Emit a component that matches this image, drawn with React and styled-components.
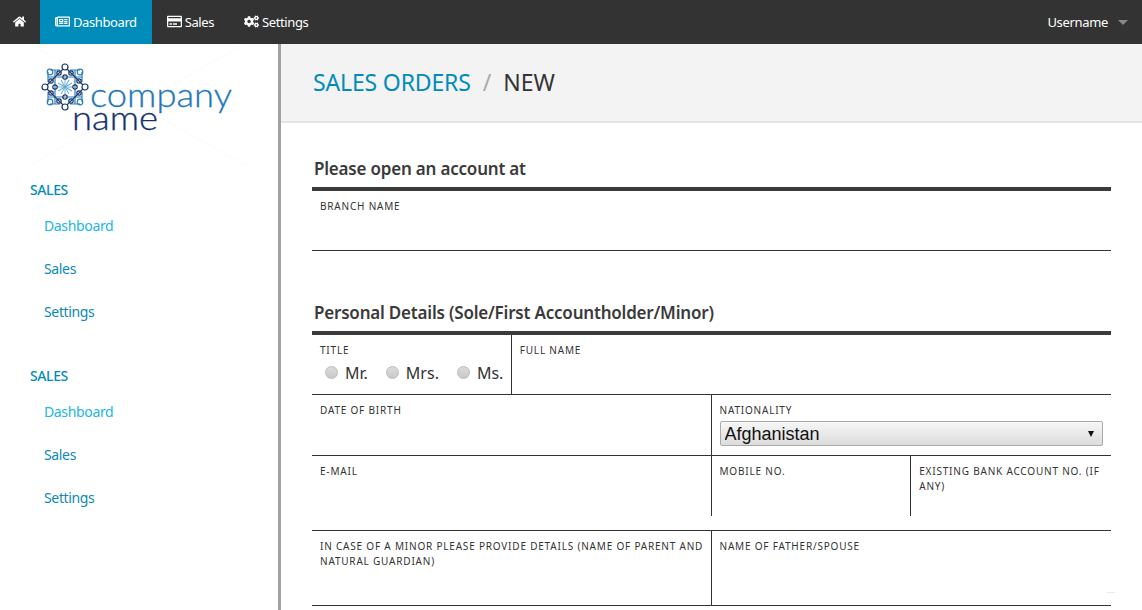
import React from 'react'
import styled, { createGlobalStyle } from 'styled-components'
import { FaHome, FaRegNewspaper, FaRegCreditCard, FaCogs } from 'react-icons/fa'

const GlobalStyle = createGlobalStyle`
  html, body {
    margin: 0;
    height: 100%;
    overflow: hidden;
    background: #fff;
    font-family: "Noto Sans", "Open Sans", sans-serif;
  }
  * { box-sizing: border-box; }
`

const tips = [[0, -20], [20, 0], [0, 20], [-20, 0]]
const links = [[-6, -14], [6, -14], [-14, -6], [14, -6], [-14, 6], [14, 6], [-6, 14], [6, 14], [0, -10], [10, 0], [0, 10], [-10, 0]]
const corners = [[-15, -15], [15, -15], [-15, 15], [15, 15]]
const rays = [0, 30, 60, 90, 120, 150]

function Logo() {
  return (
    <LogoSvg viewBox="30 44 215 121" width="215" height="121">
      <g stroke="#f9fafb" strokeWidth="1">
        <line x1="30" y1="44" x2="245" y2="165" />
        <line x1="245" y1="44" x2="30" y2="165" />
      </g>
      <g transform="translate(65 87)" fill="none">
        <g stroke="#2f7fb8" strokeWidth="1.2">
          {corners.map(([x, y]) => (
            <circle key={`c${x}${y}`} cx={x} cy={y} r="2.8" />
          ))}
          <path d="M-17 -10H17M-17 10H17M-10 -17V17M10 -17V17M-17 -15V-5M17 -15V-5M-17 15V5M17 15V5M-15 -17H-5M15 -17H5M-15 17H-5M15 17H5" />
        </g>
        <g stroke="#62a8d8" strokeWidth="0.9">
          {rays.map(a => (
            <line key={a} x1="-8" y1="0" x2="8" y2="0" transform={`rotate(${a})`} />
          ))}
        </g>
        <g stroke="#15356f" strokeWidth="1.2">
          <path d="M0 -20L20 0L0 20L-20 0Z" />
          {tips.map(([x, y]) => (
            <circle key={`t${x}${y}`} cx={x} cy={y} r="3" fill="#fff" />
          ))}
          {links.map(([x, y]) => (
            <circle key={`l${x}${y}`} cx={x} cy={y} r="2.2" />
          ))}
        </g>
      </g>
      <LogoText x="90" y="107" fontSize="33" fill="#1f78ba" stroke="#1f78ba" textLength="142" lengthAdjust="spacingAndGlyphs">company</LogoText>
      <LogoText x="72" y="130" fontSize="33" fill="#14306e" stroke="#14306e" textLength="86" lengthAdjust="spacingAndGlyphs">name</LogoText>
    </LogoSvg>
  )
}

function SideGroup() {
  return (
    <Group>
      <GroupTitle>SALES</GroupTitle>
      <SideLink $active>Dashboard</SideLink>
      <SideLink>Sales</SideLink>
      <SideLink>Settings</SideLink>
    </Group>
  )
}

export default function App() {
  return (
    <>
      <GlobalStyle />
      <TopBar>
        <NavItem aria-label="Home"><FaHome size={13} /></NavItem>
        <NavItem $active><FaRegNewspaper size={15} />Dashboard</NavItem>
        <NavItem><FaRegCreditCard size={15} />Sales</NavItem>
        <NavItem><FaCogs size={15} />Settings</NavItem>
        <UserMenu>Username<Caret /></UserMenu>
      </TopBar>
      <Page>
        <Sidebar>
          <Logo />
          <SideGroup />
          <SideGroup />
        </Sidebar>
        <Main>
          <PageHeader>
            <Crumb>SALES ORDERS</Crumb>
            <Slash>/</Slash>
            <Current>NEW</Current>
          </PageHeader>
          <Content>
            <Section>
              <SectionTitle>Please open an account at</SectionTitle>
              <Row $h={60}>
                <Cell $w={100}><Label>Branch Name</Label></Cell>
              </Row>
            </Section>
            <Section $top={47}>
              <SectionTitle>Personal Details (Sole/First Accountholder/Minor)</SectionTitle>
              <Row $h={60}>
                <Cell $w={25}>
                  <Label>Title</Label>
                  <Radios>
                    <RadioLabel><Radio type="radio" name="title" />Mr.</RadioLabel>
                    <RadioLabel><Radio type="radio" name="title" />Mrs.</RadioLabel>
                    <RadioLabel><Radio type="radio" name="title" />Ms.</RadioLabel>
                  </Radios>
                </Cell>
                <Cell $w={75}><Label>Full Name</Label></Cell>
              </Row>
              <Row $h={61}>
                <Cell $w={50}><Label>Date of Birth</Label></Cell>
                <Cell $w={50}>
                  <Label>Nationality</Label>
                  <SelectWrap>
                    <Select defaultValue="Afghanistan">
                      <option>Afghanistan</option>
                    </Select>
                  </SelectWrap>
                </Cell>
              </Row>
              <Row $h={60} $open>
                <Cell $w={50}><Label>E-mail</Label></Cell>
                <Cell $w={25}><Label>Mobile No.</Label></Cell>
                <Cell $w={25}><Label>Existing Bank Account No. (If Any)</Label></Cell>
              </Row>
              <Row $h={76} $gap={14} $rule>
                <Cell $w={50}><Label>In case of a minor please provide details (Name of parent and natural guardian)</Label></Cell>
                <Cell $w={50}><Label>Name of Father/Spouse</Label></Cell>
              </Row>
            </Section>
          </Content>
        </Main>
      </Page>
    </>
  )
}

const TopBar = styled.header`
  display: flex;
  height: 44px;
  background: #333;
`

const NavItem = styled.a`
  display: flex;
  align-items: center;
  gap: 3px;
  padding: 0 15px 1px;
  font-size: 13px;
  letter-spacing: -0.4px;
  color: #fff;
  background: ${props => (props.$active ? '#008cba' : 'transparent')};
  &:first-child {
    padding: 0 14px 1px 13px;
  }
`

const UserMenu = styled.div`
  display: flex;
  align-items: center;
  margin-left: auto;
  padding: 0 14px 1px 0;
  font-size: 13px;
  letter-spacing: -0.33px;
  color: #fff;
`

const Caret = styled.span`
  margin-left: 10px;
  margin-top: 2px;
  border: 5px solid transparent;
  border-top-color: #888;
  border-bottom-width: 0;
`

const Page = styled.div`
  display: flex;
  height: 566px;
`

const Sidebar = styled.aside`
  flex: 0 0 281px;
  border-right: 3px solid #a2a2a2;
  padding-left: 30px;
  overflow: hidden;
`

const LogoSvg = styled.svg`
  display: block;
`

const LogoText = styled.text`
  font-family: Lato, sans-serif;
  font-weight: 300;
  stroke-width: 0.3px;
`

const Group = styled.div`
  padding-top: 15px;
  height: 186px;
`

const GroupTitle = styled.h5`
  margin: 0 0 4px;
  font-size: 14px;
  line-height: 20px;
  font-weight: 500;
  letter-spacing: -0.4px;
  color: #008cba;
`

const SideLink = styled.a`
  display: block;
  height: 43px;
  line-height: 43px;
  padding-left: 14px;
  font-size: 14px;
  letter-spacing: -0.35px;
  color: ${props => (props.$active ? '#1bb5e6' : '#0a8ab5')};
`

const Main = styled.main`
  flex: 1;
  min-width: 0;
`

const PageHeader = styled.div`
  display: flex;
  align-items: center;
  height: 79px;
  padding: 0 0 2px 32px;
  background: #f3f3f3;
  border-bottom: 2px solid #e4e4e4;
  font-size: 23px;
`

const Crumb = styled.span`
  letter-spacing: -0.15px;
  color: #008cba;
`

const Slash = styled.span`
  margin: 0 12px;
  color: #aaa;
`

const Current = styled.span`
  color: #333;
`

const Content = styled.div`
  padding: 31px 31px 0;
`

const Section = styled.section`
  margin-top: ${props => props.$top || 0}px;
`

const SectionTitle = styled.h3`
  margin: 0;
  height: 37px;
  padding: 2px 0 0 2px;
  font-size: 17px;
  line-height: 26px;
  font-weight: 600;
  letter-spacing: -0.2px;
  color: #3a3a3a;
  border-bottom: 4px solid #3a3a3a;
`

const Row = styled.div`
  position: relative;
  display: flex;
  height: ${props => props.$h}px;
  margin-top: ${props => props.$gap || 0}px;
  border-top: ${props => (props.$rule ? '1px solid #333' : '0')};
  border-bottom: ${props => (props.$open ? '0' : '1px solid #333')};
  ${props => props.$rule && `
    &::after {
      content: '';
      position: absolute;
      right: -4px;
      top: 61px;
      width: 8px;
      height: 1px;
      background: #e8e8e8;
    }
  `}
`

const Cell = styled.div`
  width: ${props => props.$w}%;
  padding: 8px 7px 0 8px;
  &:not(:last-child) {
    border-right: 1px solid #333;
  }
`

const Label = styled.label`
  display: block;
  font-size: 10px;
  line-height: 15px;
  letter-spacing: 0.8px;
  text-transform: uppercase;
  color: #333;
`

const Radios = styled.div`
  display: flex;
  align-items: center;
  gap: 18px;
  margin-top: 5px;
  padding-left: 5px;
`

const RadioLabel = styled.span`
  display: flex;
  align-items: center;
  gap: 7px;
  font-size: 16px;
  line-height: 20px;
  color: #333;
`

const Radio = styled.input`
  appearance: none;
  width: 13px;
  height: 13px;
  margin: 0 0 2px;
  border: 1px solid #bbb;
  border-radius: 50%;
  background: linear-gradient(#dcdcdc, #c8c8c8);
`

const SelectWrap = styled.div`
  position: relative;
  margin: 3px 1px 0 0;
  &::after {
    content: '';
    position: absolute;
    right: 9px;
    top: 10px;
    border: 3.5px solid transparent;
    border-top: 6px solid #111;
    border-bottom-width: 0;
  }
`

const Select = styled.select`
  appearance: none;
  display: block;
  width: 100%;
  height: 25px;
  padding: 0 4px;
  border: 1px solid #aaa;
  border-radius: 2px;
  background: linear-gradient(#f7f7f7, #dcdcdc);
  font-family: "Liberation Sans", Arial, sans-serif;
  font-size: 18px;
  color: #111;
`
